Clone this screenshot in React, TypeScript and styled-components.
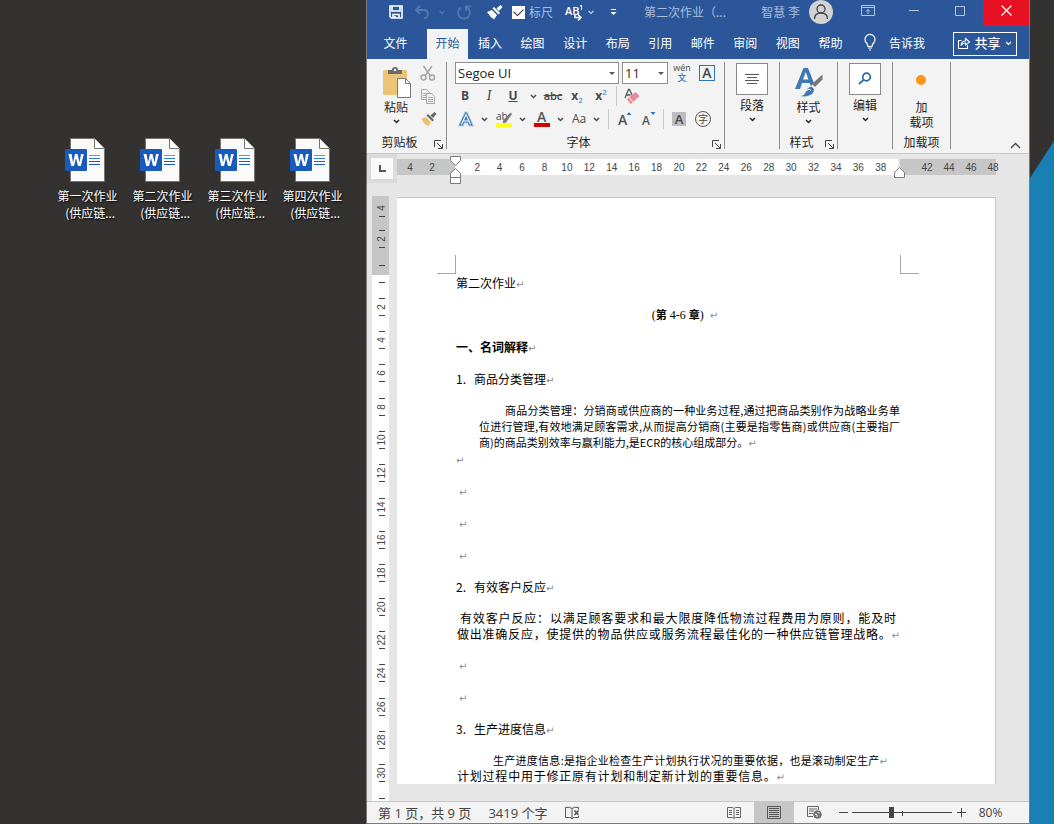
import React from "react";
import styled, { createGlobalStyle, css } from "styled-components";

const ui = `"Open Sans", "Noto Sans CJK SC", sans-serif`;
const cjk = `"Noto Sans CJK SC", sans-serif`;
const word = "#2b579a";

const Global = createGlobalStyle`
  * { box-sizing: border-box; }
  body { margin: 0; background: #333231; font-family: ${cjk}; font-size: 12px; color: #262626; }
  button, select, input { font: inherit; color: inherit; }
  button { background: none; border: 0; padding: 0; cursor: pointer; }
  svg { display: block; flex: none; overflow: visible; }
`;

/* ---------- desktop ---------- */
const Desktop = styled.main`
  display: grid;
  grid-template-columns: 366px minmax(0, 1fr) 24px;
  height: 100vh;
  overflow: hidden;
`;
const Shortcuts = styled.ul`
  list-style: none;
  margin: 0;
  padding: 136px 0 0 50px;
  display: flex;
`;
const Shortcut = styled.li`
  width: 75px;
`;
const ShortcutLink = styled.a`
  display: flex;
  flex-direction: column;
  align-items: center;
  gap: 3px;
  color: #fff;
  text-decoration: none;
  text-align: center;
  line-height: 17px;
  text-shadow: 1px 1px 2px #000;
`;
const Wallpaper = styled.div`
  margin-top: 141px;
  background: #1a7fb3;
  clip-path: polygon(100% 0, 100% 100%, 0 100%, 0 37px);
`;

/* ---------- window ---------- */
const Window = styled.section`
  display: flex;
  flex-direction: column;
  min-width: 0;
  min-height: 0;
  border: 1px solid #7a7a7a;
  border-top: 0;
  background: #e6e6e6;
`;
const TitleBar = styled.header`
  display: flex;
  align-items: flex-start;
  height: 29px;
  flex: none;
  background: ${word};
  color: #a9bddb;
  padding-left: 17px;
  line-height: 24px;
`;
const QuickTools = styled.div`
  display: flex;
  gap: 6px;
  height: 24px;
  align-items: center;
`;
const QuickButton = styled.button<{ $dim?: boolean }>`
  display: flex;
  align-items: center;
  justify-content: center;
  gap: ${(p) => (p.$dim ? 8 : 2)}px;
  min-width: 24px;
  height: 24px;
  color: ${(p) => (p.$dim ? "#5478b1" : "#c3d0e6")};
`;
const Check = styled.label`
  display: flex;
  align-items: center;
  gap: 4px;
  margin-right: 6px;
  input {
    appearance: none;
    width: 13px;
    height: 13px;
    margin: 0;
    background: #fff;
    display: grid;
    place-items: center;
  }
  input:checked::before {
    content: "";
    width: 8px;
    height: 5px;
    border: solid #333;
    border-width: 0 0 1px 1px;
    transform: translateY(-1px) rotate(-45deg);
  }
`;
const DocTitle = styled.h1`
  flex: 1;
  margin: 0 0 0 19px;
  font-size: 12px;
  font-weight: 400;
  white-space: nowrap;
  overflow: hidden;
`;
const Account = styled.button`
  display: flex;
  align-items: center;
  gap: 9px;
  height: 24px;
  margin-right: 12px;
`;
const Caption = styled.button<{ $close?: boolean }>`
  width: 46px;
  height: 26px;
  padding-bottom: 5px;
  display: flex;
  align-items: center;
  justify-content: center;
  color: ${(p) => (p.$close ? "#fff" : "#b5c6e0")};
  background: ${(p) => (p.$close ? "#e81123" : "transparent")};
`;
const TabBar = styled.nav`
  display: flex;
  height: 30px;
  flex: none;
  background: ${word};
  color: #fff;
  padding: 0 12px 0 8px;
`;
const Tabs = styled.div`
  display: flex;
  justify-content: space-between;
  width: 424px;
  margin-left: 11px;
`;
const Tab = styled.button<{ $on?: boolean }>`
  width: 41px;
  padding-bottom: 3px;
  ${(p) => p.$on && css`background: #f3f3f3; color: ${word};`}
`;
const TellMe = styled.button`
  display: flex;
  align-items: center;
  gap: 11px;
  margin: 0 auto 3px 11px;
`;
const Share = styled.button`
  display: flex;
  align-items: center;
  justify-content: center;
  gap: 4px;
  width: 64px;
  height: 24px;
  margin-top: 3px;
  padding-bottom: 2px;
  border: 1px solid #fff;
  font-weight: 500;
  font-size: 13px;
  line-height: 20px;
`;

/* ---------- ribbon ---------- */
const Ribbon = styled.div`
  display: flex;
  height: 95px;
  flex: none;
  background: #f3f3f3;
  border-bottom: 1px solid #c8c8c8;
  padding: 3px 0 4px;
`;
const Group = styled.section<{ $w: number }>`
  display: flex;
  flex-direction: column;
  justify-content: space-between;
  width: ${(p) => p.$w}px;
  flex: none;
  border-right: 1px solid #8f8f8f;
`;
const GroupFoot = styled.footer`
  position: relative;
  height: 14px;
  line-height: 14px;
  text-align: center;
  padding-right: 14px;
`;
const PlainFoot = styled(GroupFoot)`
  padding-right: 0;
`;
const Launcher = styled.button`
  position: absolute;
  right: 3px;
  bottom: 0;
`;
const BigButton = styled.button`
  display: flex;
  flex-direction: column;
  align-items: center;
  align-self: center;
  width: 38px;
  line-height: 15px;
`;
const ClipBody = styled.div`
  display: flex;
  padding-left: 10px;
  gap: 3px;
  ${BigButton} { align-self: flex-start; }
`;
const BigIcon = styled.span<{ $box?: boolean }>`
  display: grid;
  place-items: center;
  width: 32px;
  height: 32px;
  margin: ${(p) => (p.$box ? "1px 0 2px" : "4px 0 1px")};
  ${(p) => p.$box && css`background: #fff; border: 1px solid #8a8a8a;`}
`;
const ChevronSlot = styled.span`
  display: block;
  padding-top: 5px;
`;
const Stack = styled.div`
  display: flex;
  flex-direction: column;
  gap: 1px;
`;
const FontBody = styled.div`
  display: flex;
  flex-direction: column;
  gap: 1px;
  padding-left: 8px;
`;
const Row = styled.div<{ $gap: number }>`
  display: flex;
  align-items: center;
  height: 22px;
  gap: ${(p) => p.$gap}px;
`;
const Combo = styled.label<{ $w: number }>`
  position: relative;
  width: ${(p) => p.$w}px;
  height: 22px;
  select {
    appearance: none;
    width: 100%;
    height: 22px;
    padding: 0 16px 0 2px;
    border: 1px solid #8f8f8f;
    border-radius: 0;
    background: #fff;
    font-family: ${ui};
    font-size: 13px;
    line-height: 20px;
  }
  svg { position: absolute; right: 4px; top: 10px; pointer-events: none; }
`;
const Tool = styled.button<{ $w?: number }>`
  display: flex;
  align-items: center;
  justify-content: center;
  width: ${(p) => p.$w ?? 20}px;
  height: 22px;
  flex: none;
  color: #4a4a4a;
  font-family: ${ui};
  font-size: 12px;
  line-height: 16px;
  sub, sup { font-size: 8px; line-height: 8px; color: #2e75b6; }
  sub { align-self: flex-end; margin-bottom: 3px; }
  sup { align-self: flex-start; margin-top: 3px; }
`;
const SplitTool = styled(Tool)`
  width: 34px;
  gap: 7px;
  justify-content: flex-start;
  padding-left: 3px;
`;
const Bold = styled.b``;
const Italic = styled.i`font-family: "Liberation Serif", serif; font-weight: 400; font-size: 14px;`;
const Under = styled.u`font-weight: 700;`;
const Strike = styled.s`font-weight: 600; font-size: 11px;`;
const CharBox = styled.span`
  width: 16px;
  height: 16px;
  border: 1px solid #2e75b6;
  font-size: 14px;
  line-height: 14px;
  font-weight: 600;
`;
const Shade = styled.span`
  width: 14px;
  height: 14px;
  background: #bdbdbd;
  font-size: 13px;
  line-height: 14px;
  font-weight: 600;
`;
const Circled = styled.span`
  width: 16px;
  height: 16px;
  border: 1px solid #5a5a5a;
  border-radius: 50%;
  font: 10px/14px ${cjk};
`;
const Phonetic = styled.span`
  display: flex;
  flex-direction: column;
  align-items: center;
  font-size: 9px;
  line-height: 10px;
  em { font: 500 9px/10px ${cjk}; color: #2e75b6; }
`;
const Separator = styled.span`
  width: 1px;
  height: 20px;
  margin: 0 1px;
  background: #c8c8c8;
`;
const Collapse = styled.button`
  margin: auto 8px 0 auto;
`;

/* ---------- rulers and page ---------- */
const RulerRow = styled.div`
  display: flex;
  height: 29px;
  flex: none;
  padding-right: 33px;
`;
const TabKind = styled.button`
  width: 30px;
  display: grid;
  place-items: center;
  border: 4px solid #dadada;
  background: #fafafa;
  flex: none;
`;
const Ruler = styled.div`
  position: relative;
  display: flex;
  flex: 1;
  height: 16px;
  margin-top: 5px;
  color: #444;
  font: 10px/18px "Liberation Sans", sans-serif;
`;
const Scale = styled.div<{ $kind: "left" | "mid" | "right" }>`
  display: flex;
  text-align: center;
  span { flex: 1 0 22px; min-width: 0; }
  ${(p) => p.$kind === "left" && css`width: 58px; padding: 0 12px 0 2px; background: #c6c6c6;`}
  ${(p) => p.$kind === "mid" && css`flex: 1; padding: 0 6px 0 11px; background: #fff; border-right: 2px solid #e6e6e6;`}
  ${(p) => p.$kind === "right" && css`width: 96px; padding-left: 16px; background: #c6c6c6;`}
`;
const IndentLeft = styled.svg`
  position: absolute;
  left: 53px;
  top: -3px;
`;
const IndentRight = styled.svg`
  position: absolute;
  right: 91px;
  top: 8px;
`;
const Workspace = styled.div`
  display: flex;
  flex: 1;
  min-height: 0;
  padding: 13px 33px 0 5px;
`;
const VRuler = styled.div`
  display: flex;
  flex-direction: column;
  width: 17px;
  flex: none;
  margin-right: 8px;
  background: #fff;
  color: #444;
  font: 10px/10px "Liberation Sans", sans-serif;
`;
const VMargin = styled.div`
  display: flex;
  flex-direction: column;
  height: 79px;
  flex: none;
  background: #c6c6c6;
  align-items: center;
`;
const VBody = styled.div`
  display: flex;
  flex-direction: column;
  flex: 1;
  align-items: center;
`;
const VCell = styled.div<{ $first?: boolean }>`
  display: flex;
  flex-direction: column;
  align-items: center;
  justify-content: center;
  ${(p) => (p.$first ? css`height: 24px;` : css`flex: 1 1 33px;`)}
`;
const Num = styled.span`
  display: grid;
  place-items: center;
  width: 16px;
  height: 16px;
  padding-top: 2px;
  transform: rotate(-90deg);
`;
const Tick = styled.i<{ $top?: number; $bottom?: number }>`
  display: block;
  width: 6px;
  height: 1px;
  flex: none;
  margin-left: 3px;
  margin-top: ${(p) => p.$top ?? 0}px;
  margin-bottom: ${(p) => p.$bottom ?? 0}px;
  background: #444;
`;
const Page = styled.article`
  flex: 1;
  min-width: 0;
  margin: 1px 0 17px;
  padding: 57px 95px 0 59px;
  background: #fff;
  border: solid #c6c6c6;
  border-width: 1px 1px 0 0;
  overflow: hidden;
  color: #000;
`;
const Corners = styled.div`
  display: flex;
  justify-content: space-between;
  height: 19px;
  margin: 0 -19px;
  i { width: 19px; border: solid #a6a6a6; border-width: 0 1px 1px 0; }
  i + i { border-width: 0 0 1px 1px; }
`;
const Para = styled.p<{ $center?: boolean; $indent?: number }>`
  margin: 0 0 14px;
  line-height: 18px;
  padding-left: ${(p) => p.$indent ?? 0}px;
  ${(p) => p.$center && css`
    padding-left: 14px;
    text-align: center;
    font-family: "Liberation Serif", "Noto Sans CJK SC", serif;
    b { font-size: 11px; }
  `}
`;
const Section = styled.h2`
  margin: 0 0 14px;
  font-size: 12px;
  font-weight: 700;
  line-height: 18px;
`;
const Item = styled.h3`
  display: flex;
  gap: 8px;
  margin: 0 0 14px;
  font-size: 12px;
  font-weight: 400;
  line-height: 18px;
`;
const Definition = styled.p`
  margin: 0 0 0 23px;
  font-size: 11px;
  line-height: 16px;
  text-align: justify;
  text-indent: 26px;
`;
const Answer = styled.div`
  margin-bottom: 14px;
`;
const Line = styled.p<{ $size: number; $left: number; $right: number }>`
  margin: 0 ${(p) => p.$right}px 0 ${(p) => p.$left}px;
  font-size: ${(p) => p.$size}px;
  line-height: 16px;
  text-align: justify;
  text-align-last: justify;
  white-space: nowrap;
`;
const Mark = styled.span`
  font: 10px/10px "DejaVu Sans", sans-serif;
  color: #8a8a8a;
`;

/* ---------- status bar ---------- */
const StatusBar = styled.footer`
  display: flex;
  align-items: center;
  height: 22px;
  flex: none;
  background: #f3f3f3;
  border-top: 1px solid #c6c6c6;
  color: #444;
  font-family: ${ui};
  padding: 0 25px 0 11px;
`;
const StatusText = styled.span`
  margin-right: 17px;
  font-size: 13px;
  line-height: 20px;
  white-space: nowrap;
`;
const ViewButton = styled.button<{ $on?: boolean }>`
  display: grid;
  place-items: center;
  width: 40px;
  height: 21px;
  background: ${(p) => (p.$on ? "#c6c6c6" : "transparent")};
`;
const Spacer = styled.span`
  flex: 1;
`;
const ZoomButton = styled.button`
  width: 18px;
  height: 21px;
  display: grid;
  place-items: center;
`;
const ZoomSlider = styled.label`
  position: relative;
  width: 100px;
  height: 20px;
  &::before {
    content: "";
    position: absolute;
    left: 50px;
    top: 8px;
    width: 1px;
    height: 5px;
    background: #444;
  }
  input {
    appearance: none;
    display: block;
    width: 100%;
    height: 20px;
    margin: 0;
    background: linear-gradient(#444, #444) center / 100% 1px no-repeat;
  }
  input::-webkit-slider-thumb {
    appearance: none;
    width: 5px;
    height: 11px;
    background: #444;
  }
`;
const ZoomValue = styled.button`
  margin-left: 7px;
  width: 27px;
  font-size: 12px;
`;

/* ---------- drawings ---------- */
const Chevron = ({ w = 7, bold = false }: { w?: number; bold?: boolean }) => (
  <svg width={w} height="5" viewBox="0 0 7 5" fill="none" stroke="currentColor" strokeWidth={bold ? 1.5 : 1.2}>
    <path d="M1 1l2.500 2.500L6 1" />
  </svg>
);
const LauncherIcon = () => (
  <svg width="9" height="9" viewBox="0 0 9 9" fill="none" stroke="#444">
    <path d="M.5 7V.5H7M3 3l5 5M8.500 4v4.500H4" />
  </svg>
);
const WordFile = () => (
  <svg width="48" height="48" viewBox="1 0 48 48">
    <path d="M7.500 2.500h24l10 10v33h-34z" fill="#fafafa" stroke="#77746f" />
    <path d="M31.500 2.500v10h10" fill="#fff" stroke="#77746f" />
    <path d="M26 19.500h11" stroke="#41a5ee" />
    <path d="M26 22.500h11" stroke="#2b7cd3" />
    <path d="M26 25.500h11M26 28.500h11" stroke="#185abd" />
    <rect x="2" y="13" width="22" height="22" rx="1" fill="#185abd" />
    <path d="M5.500 18h3l1.500 8.500L12 18h2.500l2 8.500L18 18h2.800l-3 12H15l-2-8-2 8H8.300z" fill="#fff" />
  </svg>
);
const SaveIcon = () => (
  <svg width="14" height="14" viewBox="0 0 14 14" fill="none" stroke="#fff" strokeWidth="1.600">
    <path d="M1 1h12v12H2.500L1 11.500zM3 1v5h8V1" />
    <path d="M4 13V9.500h6V13" /><path d="M6 11v2" />
  </svg>
);
const UndoIcon = () => (
  <svg width="16" height="15" viewBox="0 0 16 15" fill="none" stroke="currentColor" strokeWidth="1.800">
    <path d="M6 1L2 5l4 4M2.500 5H10q4 0 4 4t-4 4.500" />
  </svg>
);
const RedoIcon = () => (
  <svg width="15" height="15" viewBox="0 0 15 15" fill="none" stroke="currentColor" strokeWidth="1.800">
    <path d="M4 2.500a6 6 0 1 0 6 0M9 6V1.500h5" />
  </svg>
);
const BrushIcon = ({ head, handle }: { head: string; handle: string }) => (
  <svg width="17" height="16" viewBox="0 0 17 16">
    <path d="M1 8l5-2 5 5-3 4.500L5.500 13l.5 1.500z" fill={head} />
    <path d="M6.500 4.500L8 3l6 6-1.500 1.500z" fill={handle} />
    <path d="M10.500 4.500L14.500 1l2 2-3.500 4z" fill={handle} />
  </svg>
);
const AutoCorrectIcon = () => (
  <svg width="20" height="18" viewBox="0 0 20 18" fill="#fff">
    <text x="0" y="12" fontSize="11" fontWeight="600" fontFamily="Open Sans">AB</text>
    <path d="M14.500 3l1.500-1h1v5h-1V3.500z" />
    <path d="M10 11v3.500h5M13 11.500l3 3-3 3" fill="none" stroke="#fff" strokeWidth="1.500" />
  </svg>
);
const Person = () => (
  <svg width="24" height="24" viewBox="0 0 24 24" fill="none">
    <circle cx="12" cy="12" r="12" fill="#d2d2d2" />
    <circle cx="12" cy="9" r="4" stroke="#444" strokeWidth="1.300" />
    <path d="M5.500 19q0-6 6.500-6t6.500 6" stroke="#444" strokeWidth="1.300" />
  </svg>
);
const PasteIcon = () => (
  <svg width="29" height="31" viewBox="0 0 29 31">
    <rect x="1" y="3" width="24" height="25" rx="1.500" fill="#ebc475" />
    <path d="M6 7V3h4q0-3 3-3t3 3h4v4z" fill="#6b6b6b" /><circle cx="13" cy="3" r="1.200" fill="#f3f3f3" />
    <path d="M15.500 11.500h8l5 5v14h-13z" fill="#fff" stroke="#777" />
    <path d="M23.500 11.500v5h5" fill="none" stroke="#777" />
  </svg>
);
const CutIcon = () => (
  <svg width="16" height="16" viewBox="0 0 16 16" fill="none" stroke="#a2a2a6" strokeWidth="1.400">
    <path d="M3.500 1l7 10M12 1L5 11" /><circle cx="3.500" cy="12.500" r="2.500" /><circle cx="12" cy="12.500" r="2.500" />
  </svg>
);
const CopyIcon = () => (
  <svg width="16" height="15" viewBox="0 0 16 15" fill="#f3f3f3" stroke="#a8a8a8">
    <path d="M1.500.5h5l3 3v7h-8z" /><path d="M3 4.500h3M3 6.500h3M3 8.500h3" />
    <path d="M6.500 4.500h5l3 3v7h-8z" /><path d="M8 8.500h5M8 10.500h5M8 12.500h5" />
  </svg>
);
const EraserIcon = () => (
  <svg width="16" height="16" viewBox="0 0 16 16">
    <path d="M1 10L4.500 1.500h1L8 7M2.500 7h4" fill="none" stroke="#555" strokeWidth="1.300" />
    <path d="M3 11l8.500-7 4 4-8 7.500H6z" fill="#e8889a" /><path d="M5 9.500l4 4.500" stroke="#fff" />
  </svg>
);
const EffectsIcon = () => (
  <svg width="16" height="16" viewBox="0 0 16 16" fill="none">
    <path d="M2 14L7.500 2h1L14 14h-2.500l-1.300-3H5.800l-1.300 3zM6.800 9h2.400L8 6z" stroke="#b8d3ec" strokeWidth="3" />
    <path d="M2 14L7.500 2h1L14 14h-2.500l-1.300-3H5.800l-1.300 3zM6.800 9h2.400L8 6z" fill="#fff" stroke="#3c78b4" strokeWidth="1.100" />
  </svg>
);
const HighlightIcon = () => (
  <svg width="16" height="17" viewBox="0 0 16 17">
    <text x="0" y="9" fontSize="10" fontFamily="Open Sans" fill="#444">ab</text>
    <path d="M14.500 1.500L16 3l-6 8.500L6.500 12.500l1-3.500z" fill="#777" />
    <rect x="0" y="12" width="16" height="4" fill="#ffff19" />
  </svg>
);
const FontColorIcon = () => (
  <svg width="16" height="17" viewBox="0 0 16 17">
    <text x="3" y="11" fontSize="14" fontWeight="600" fontFamily="Open Sans" fill="#555">A</text>
    <rect x="0" y="12" width="16" height="4" fill="#d00000" />
  </svg>
);
const ResizeIcon = ({ up }: { up?: boolean }) => (
  <svg width="16" height="16" viewBox="0 0 16 16">
    <text x="2" y="14" fontSize={up ? 14 : 12} fontWeight="600" fontFamily="Open Sans" fill="#555">A</text>
    <path d={up ? "M10.500 4L13 1l2.500 3z" : "M10.500 1h5L13 4z"} fill="#2e75b6" />
  </svg>
);
const LinesIcon = () => (
  <svg width="16" height="12" viewBox="0 0 16 12" stroke="#555"><path d="M1 1.500h14M3 4.500h10M1 7.500h14M3 10.500h10" /></svg>
);
const StylesIcon = () => (
  <svg width="28" height="30" viewBox="0 0 28 30">
    <path d="M0 22L8.500 1h4.500L19 16l-3 3-1.500-3H7l-2 6zM8 12.500h5.500L10.700 5z" fill="#4178b4" />
    <path d="M27.500 7.500v5L20 20l-3-3z" fill="#777" />
    <path d="M5 29q5 0 6-5 2-4 5.500-4.500L19 22q0 5-5 6.500-4 1.500-9 .5z" fill="#4178b4" />
    <path d="M11 24l3-2 2 1.500" stroke="#fff" fill="none" />
  </svg>
);
const FindIcon = () => (
  <svg width="14" height="14" viewBox="0 0 14 14" fill="none" stroke="#2e68a8" strokeWidth="1.700">
    <circle cx="8.500" cy="5" r="3.800" /><path d="M5.500 8L1 12" />
  </svg>
);
const BulbIcon = () => (
  <svg width="16" height="17" viewBox="0 0 16 17" fill="none" stroke="#fff" strokeWidth="1.200">
    <path d="M6 12.500q0-2-1.500-3.500A5 5 0 1 1 11.500 9Q10 10.500 10 12.500zM6 14h4M7 16h2" />
  </svg>
);
const ShareIcon = () => (
  <svg width="12" height="12" viewBox="0 0 12 12" fill="none" stroke="#fff" strokeWidth="1.100">
    <path d="M3.500 3.500H.5v8h9V8M3 8.500Q3.500 4 7.500 4V1.500L11.500 5l-4 3V6Q4.500 6 3 8.500z" />
  </svg>
);
const ProofIcon = () => (
  <svg width="15" height="14" viewBox="0 0 15 14" fill="none" stroke="#555">
    <path d="M7 2.500Q5 .5.5 1.500v10h4q2 0 2.500 1.500zM7 2.500Q9 .5 13.500 1.500v2M7 13q.5-1.500 2.500-1.500h4V10" />
    <path d="M9.500 4.500l4 4.500M13.500 4.500l-4 4.500" strokeWidth="1.500" />
  </svg>
);
const ReadIcon = () => (
  <svg width="14" height="13" viewBox="0 0 14 13" fill="none" stroke="#666">
    <path d="M.5 1.500h5L7 2.500l1.500-1h5v10h-5l-1.500 1-1.500-1h-5zM7 2.500v10M2 4.500h3M2 6.500h3M2 8.500h3M9 4.500h3M9 6.500h3M9 8.500h3" />
  </svg>
);
const PrintIcon = () => (
  <svg width="14" height="13" viewBox="0 0 14 13" fill="none" stroke="#555">
    <path d="M.5.5h13v12H.5zM2 2.500h10M2 4.500h10M2 6.500h10M2 8.500h10M2 10.500h10" />
  </svg>
);
const WebIcon = () => (
  <svg width="15" height="13" viewBox="0 0 15 13" fill="none" stroke="#666">
    <path d="M6 10.500H.5V.5h11V4M2 3h8M2 5h5M2 7.500h4" />
    <circle cx="10.500" cy="8.500" r="3.800" fill="#777" /><path d="M8 8l2 1v2M10.500 6.500l2 .5" stroke="#f3f3f3" />
  </svg>
);

const files = ["第一次作业", "第二次作业", "第三次作业", "第四次作业"];
const tabs = ["开始", "插入", "绘图", "设计", "布局", "引用", "邮件", "审阅", "视图", "帮助"];
const evens = (from: number, to: number) =>
  Array.from({ length: (to - from) / 2 + 1 }, (_, i) => from + i * 2);

const Return = () => <Mark>↵</Mark>;
const Launch = ({ label }: { label: string }) => (
  <Launcher aria-label={label}><LauncherIcon /></Launcher>
);

export default function App() {
  return (
    <>
      <Global />
      <Desktop>
        <Shortcuts>
          {files.map((f) => (
            <Shortcut key={f}>
              <ShortcutLink href="#">
                <WordFile />
                <span>{f}<br />&nbsp;&nbsp;(供应链...</span>
              </ShortcutLink>
            </Shortcut>
          ))}
        </Shortcuts>

        <Window>
          <TitleBar>
            <QuickTools>
              <QuickButton aria-label="保存"><SaveIcon /></QuickButton>
              <QuickButton $dim aria-label="撤消"><UndoIcon /><Chevron w={8} /></QuickButton>
              <QuickButton $dim aria-label="重复"><RedoIcon /></QuickButton>
              <QuickButton aria-label="格式刷"><BrushIcon head="#fff" handle="#fff" /></QuickButton>
              <Check><input type="checkbox" defaultChecked />标尺</Check>
              <QuickButton aria-label="更正"><AutoCorrectIcon /><Chevron w={8} /></QuickButton>
              <QuickButton aria-label="自定义">
                <svg width="7" height="7" viewBox="0 0 7 7" fill="#fff"><path d="M1 0h5v1H1zM.5 3h6l-3 3z" /></svg>
              </QuickButton>
            </QuickTools>
            <DocTitle>第二次作业（...</DocTitle>
            <Account>智慧 李<Person /></Account>
            <Caption aria-label="功能区显示选项">
              <svg width="14" height="11" viewBox="0 0 14 11" fill="none" stroke="currentColor">
                <path d="M.5.5h13v10H.5zM.5 2.500h13M7 9V4.500M5 6.500l2-2 2 2" />
              </svg>
            </Caption>
            <Caption aria-label="最小化">
              <svg width="10" height="1"><path d="M0 .5h10" stroke="currentColor" /></svg>
            </Caption>
            <Caption aria-label="最大化">
              <svg width="10" height="10" fill="none" stroke="currentColor"><path d="M.5.5h9v9h-9z" /></svg>
            </Caption>
            <Caption $close aria-label="关闭">
              <svg width="11" height="11" stroke="currentColor" strokeWidth="1.200"><path d="M.5.5l10 10M10.500.5l-10 10" /></svg>
            </Caption>
          </TitleBar>

          <TabBar>
            <Tab>文件</Tab>
            <Tabs>
              {tabs.map((t, i) => <Tab key={t} $on={i === 0}>{t}</Tab>)}
            </Tabs>
            <TellMe><BulbIcon />告诉我</TellMe>
            <Share><ShareIcon />共享<Chevron w={7} /></Share>
          </TabBar>

          <Ribbon>
            <Group $w={80}>
              <ClipBody>
                <BigButton>
                  <BigIcon><PasteIcon /></BigIcon>粘贴
                  <ChevronSlot><Chevron bold /></ChevronSlot>
                </BigButton>
                <Stack>
                  <Tool aria-label="剪切"><CutIcon /></Tool>
                  <Tool aria-label="复制"><CopyIcon /></Tool>
                  <Tool aria-label="格式刷"><BrushIcon head="#ebbf75" handle="#666" /></Tool>
                </Stack>
              </ClipBody>
              <GroupFoot>剪贴板<Launch label="剪贴板选项" /></GroupFoot>
            </Group>

            <Group $w={278}>
              <FontBody>
                <Row $gap={3}>
                  <Combo $w={164}>
                    <select aria-label="字体"><option>Segoe UI</option></select>
                    <svg width="6" height="4"><path d="M0 0h6L3 3z" fill="#555" /></svg>
                  </Combo>
                  <Combo $w={46}>
                    <select aria-label="字号"><option>11</option></select>
                    <svg width="6" height="4"><path d="M0 0h6L3 3z" fill="#555" /></svg>
                  </Combo>
                  <Tool $w={22} aria-label="拼音指南"><Phonetic>wén<em>文</em></Phonetic></Tool>
                  <Tool $w={22} aria-label="字符边框"><CharBox>A</CharBox></Tool>
                </Row>
                <Row $gap={4}>
                  <Tool><Bold>B</Bold></Tool>
                  <Tool><Italic>I</Italic></Tool>
                  <Tool><Under>U</Under></Tool>
                  <Tool $w={12} aria-label="下划线样式"><Chevron bold /></Tool>
                  <Tool><Strike>abc</Strike></Tool>
                  <Tool><Bold>x</Bold><sub>2</sub></Tool>
                  <Tool><Bold>x</Bold><sup>2</sup></Tool>
                  <Separator />
                  <Tool aria-label="清除格式"><EraserIcon /></Tool>
                </Row>
                <Row $gap={4}>
                  <SplitTool aria-label="文本效果"><EffectsIcon /><Chevron bold /></SplitTool>
                  <SplitTool aria-label="突出显示"><HighlightIcon /><Chevron bold /></SplitTool>
                  <SplitTool aria-label="字体颜色"><FontColorIcon /><Chevron bold /></SplitTool>
                  <SplitTool>Aa<Chevron bold /></SplitTool>
                  <Separator />
                  <Tool aria-label="增大字号"><ResizeIcon up /></Tool>
                  <Tool aria-label="减小字号"><ResizeIcon /></Tool>
                  <Separator />
                  <Tool><Shade>A</Shade></Tool>
                  <Tool><Circled>字</Circled></Tool>
                </Row>
              </FontBody>
              <GroupFoot>字体<Launch label="字体选项" /></GroupFoot>
            </Group>

            <Group $w={55}>
              <BigButton>
                <BigIcon $box><LinesIcon /></BigIcon>段落
                <ChevronSlot><Chevron bold /></ChevronSlot>
              </BigButton>
            </Group>
            <Group $w={58}>
              <BigButton>
                <BigIcon><StylesIcon /></BigIcon>样式
                <ChevronSlot><Chevron bold /></ChevronSlot>
              </BigButton>
              <GroupFoot>样式<Launch label="样式选项" /></GroupFoot>
            </Group>
            <Group $w={55}>
              <BigButton>
                <BigIcon $box><FindIcon /></BigIcon>编辑
                <ChevronSlot><Chevron bold /></ChevronSlot>
              </BigButton>
            </Group>
            <Group $w={58}>
              <BigButton>
                <BigIcon><svg width="12" height="16"><circle cx="5" cy="6" r="5" fill="#ff9416" /></svg></BigIcon>
                加<br />载项
              </BigButton>
              <PlainFoot>加载项</PlainFoot>
            </Group>
            <Collapse aria-label="折叠功能区">
              <svg width="11" height="7" fill="none" stroke="#444" strokeWidth="1.300"><path d="M1 6l4.500-4.500L10 6" /></svg>
            </Collapse>
          </Ribbon>

          <RulerRow>
            <TabKind aria-label="制表符">
              <svg width="7" height="7"><path d="M1 0v6h6" fill="none" stroke="#555" strokeWidth="2" /></svg>
            </TabKind>
            <Ruler>
              <Scale $kind="left"><span>4</span><span>2</span></Scale>
              <Scale $kind="mid">{evens(2, 38).map((n) => <span key={n}>{n}</span>)}</Scale>
              <Scale $kind="right">{evens(42, 48).map((n) => <span key={n}>{n}</span>)}</Scale>
              <IndentLeft width="12" height="29" viewBox="0 0 12 29" fill="#fff" stroke="#7a7a7a">
                <path d="M.5.5h10v4l-5 5-5-5zM5.500 12.500l5 5v4H.5v-4zM.5 21.500h10v6H.5z" />
              </IndentLeft>
              <IndentRight width="11" height="12" viewBox="0 0 11 12" fill="#fff" stroke="#7a7a7a">
                <path d="M5.500.5l5 5v5H.5v-5z" />
              </IndentRight>
            </Ruler>
          </RulerRow>

          <Workspace>
            <VRuler>
              <VMargin>
                <VCell $first><Num>4</Num><Tick /></VCell>
                <VCell><Tick /><Num>2</Num><Tick /></VCell>
                <Tick $top={8} $bottom={9} />
              </VMargin>
              <VBody>
                <Tick $top={7} $bottom={7} />
                {evens(2, 30).map((n) => (
                  <VCell key={n}><Tick /><Num>{n}</Num><Tick /></VCell>
                ))}
                <Tick $top={8} $bottom={2} />
              </VBody>
            </VRuler>

            <Page>
              <Corners><i /><i /></Corners>
              <Para>第二次作业<Return /></Para>
              <Para $center>(<b>第</b> 4-6 <b>章</b>)&nbsp; <Return /></Para>
              <Section>一、名词解释<Return /></Section>
              <Item><span>1.</span><span>商品分类管理<Return /></span></Item>
              <Definition>
                商品分类管理：分销商或供应商的一种业务过程,通过把商品类别作为战略业务单位进行管理,有效地满足顾客需求,从而提高分销商(主要是指零售商)或供应商(主要指厂商)的商品类别效率与赢利能力,是ECR的核心组成部分。<Return />
              </Definition>
              <Para><Return /></Para>
              <Para $indent={3}><Return /></Para>
              <Para $indent={3}><Return /></Para>
              <Para $indent={3}><Return /></Para>
              <Item><span>2.</span><span>有效客户反应<Return /></span></Item>
              <Answer>
                <Line $size={12} $left={4} $right={4}>有效客户反应：以满足顾客要求和最大限度降低物流过程费用为原则，能及时</Line>
                <Line $size={12} $left={1} $right={0}>做出准确反应，使提供的物品供应或服务流程最佳化的一种供应链管理战略。<Return /></Line>
              </Answer>
              <Para $indent={3}><Return /></Para>
              <Para $indent={3}><Return /></Para>
              <Item><span>3.</span><span>生产进度信息<Return /></span></Item>
              <Answer>
                <Line $size={11} $left={37} $right={12}>生产进度信息:是指企业检查生产计划执行状况的重要依据，也是滚动制定生产<Return /></Line>
                <Line $size={12} $left={1} $right={115}>计划过程中用于修正原有计划和制定新计划的重要信息。<Return /></Line>
              </Answer>
            </Page>
          </Workspace>

          <StatusBar>
            <StatusText>第 1 页，共 9 页</StatusText>
            <StatusText>3419 个字</StatusText>
            <ProofIcon />
            <Spacer />
            <ViewButton aria-label="阅读视图"><ReadIcon /></ViewButton>
            <ViewButton $on aria-label="页面视图"><PrintIcon /></ViewButton>
            <ViewButton aria-label="Web 版式视图"><WebIcon /></ViewButton>
            <ZoomButton aria-label="缩小">
              <svg width="9" height="1"><path d="M0 .5h9" stroke="#444" /></svg>
            </ZoomButton>
            <ZoomSlider><input type="range" aria-label="缩放" min={0} max={100} defaultValue={39} /></ZoomSlider>
            <ZoomButton aria-label="放大">
              <svg width="9" height="9"><path d="M0 4.500h9M4.500 0v9" stroke="#444" /></svg>
            </ZoomButton>
            <ZoomValue>80%</ZoomValue>
          </StatusBar>
        </Window>
        <Wallpaper />
      </Desktop>
    </>
  );
}
